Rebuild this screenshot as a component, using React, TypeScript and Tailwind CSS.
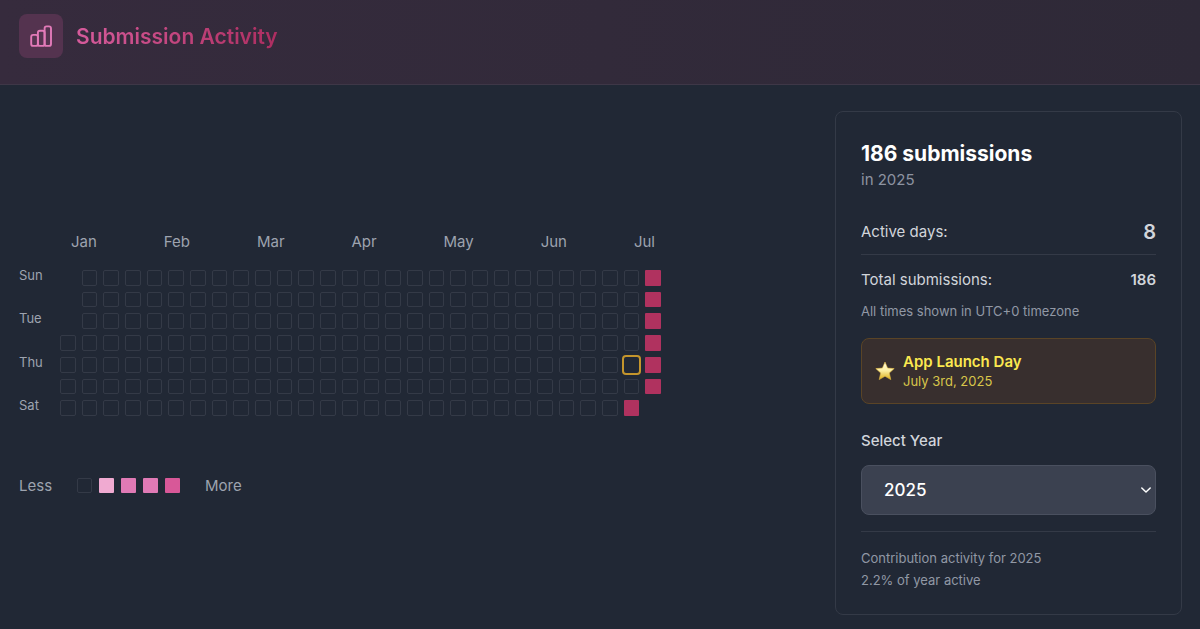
import { useState } from "react";

const WEEKS = 28;
const DAYS = 7;
const MONTHS = ["Jan", "Feb", "Mar", "Apr", "May", "Jun", "Jul"];
const DAY_LABELS = ["Sun", "", "Tue", "", "Thu", "", "Sat"];
const LEGEND = [
  "rounded-xs border border-[#343a47]",
  "rounded-[1px] bg-[#f0aad1]",
  "rounded-[1px] bg-[#e07ab5]",
  "rounded-[1px] bg-[#e07ab5]",
  "rounded-[1px] bg-[#d85898]",
];

type CellKind = "blank" | "empty" | "active" | "launch";

function cellKind(week: number, day: number): CellKind {
  if (week === 0 && day < 3) return "blank";
  if (week === WEEKS - 1) return day === 6 ? "blank" : "active";
  if (week === WEEKS - 2 && day === 6) return "active";
  if (week === WEEKS - 2 && day === 4) return "launch";
  return "empty";
}

const CELL_STYLE: Record<CellKind, string> = {
  blank: "",
  empty: "rounded-xs border border-[#343a47]",
  active: "rounded-[1px] bg-[#b0325f]",
  launch: "rounded-xs ring-2 ring-[#c4952c]",
};

function BarsIcon() {
  return (
    <svg
      className="size-6"
      viewBox="0 0 24 24"
      fill="none"
      stroke="currentColor"
      strokeWidth="1.9"
      strokeLinejoin="round"
      aria-hidden="true"
    >
      <rect x="2.2" y="10.9" width="6.7" height="11" rx="2" />
      <rect x="8.9" y="6.8" width="6.7" height="15.1" rx="2" />
      <rect x="15.6" y="2.4" width="6.4" height="19.5" rx="2" />
    </svg>
  );
}

function StarIcon() {
  return (
    <svg className="size-5 shrink-0" viewBox="0 0 20 20" aria-hidden="true">
      <defs>
        <linearGradient id="star" x1="0" y1="0" x2="0" y2="1">
          <stop offset="0" stopColor="#fffbe6" />
          <stop offset="0.5" stopColor="#fcee9f" />
          <stop offset="1" stopColor="#dcae16" />
        </linearGradient>
      </defs>
      <path
        d="M10 1 12.6 7.1 19.2 7.6 14.3 12 15.8 18.6 10 15.2 4.2 18.6 5.7 12 .8 7.6 7.4 7.1Z"
        fill="url(#star)"
        stroke="#e0b840"
        strokeWidth=".6"
        strokeLinejoin="round"
      />
    </svg>
  );
}

function Heatmap() {
  return (
    <div className="w-full max-w-[642px] pt-0.5">
      <div className="ml-[41px] flex justify-between pr-1.5 pl-[11px] text-[15px] leading-5 text-[#9da3af]">
        {MONTHS.map((m) => (
          <span key={m}>{m}</span>
        ))}
      </div>
      <div className="mt-[18px] flex">
        <div className="grid w-[41px] shrink-0 grid-rows-7 gap-1.5 text-[13px] leading-[10px] text-[#9da3af]">
          {DAY_LABELS.map((d, i) => (
            <span key={i}>{d}</span>
          ))}
        </div>
        <div className="grid flex-1 grid-flow-col grid-cols-[repeat(28,minmax(0,1fr))] grid-rows-7 gap-1.5">
          {Array.from({ length: WEEKS * DAYS }, (_, i) => (
            <div
              key={i}
              className={`aspect-square ${CELL_STYLE[cellKind(Math.floor(i / DAYS), i % DAYS)]}`}
            />
          ))}
        </div>
      </div>
      <div className="mt-[60px] flex items-center text-[15px] leading-5 text-[#9da3af]">
        <span className="w-[58px]">Less</span>
        <div className="flex gap-[7px]">
          {LEGEND.map((c, i) => (
            <div key={i} className={`size-[15px] ${c}`} />
          ))}
        </div>
        <span className="ml-[25px]">More</span>
      </div>
    </div>
  );
}

function Summary() {
  const [year, setYear] = useState("2025");
  return (
    <aside className="w-[347px] shrink-0 rounded-lg border border-[#343a47] px-[25px] pt-[25px] pb-[23px]">
      <h2 className="text-[21px] leading-[33px] font-bold text-white">186 submissions</h2>
      <p className="text-[15px] leading-5 text-[#8d93a1]">in 2025</p>

      <div className="mt-7 flex items-center justify-between border-b border-[#343a47] pb-2 text-[15px] leading-7 text-[#d1d5db]">
        <span>Active days:</span>
        <span className="text-xl leading-7 font-semibold">8</span>
      </div>
      <div className="mt-[13px] flex items-center justify-between text-[15px] leading-6 text-[#d1d5db]">
        <span>Total submissions:</span>
        <span className="font-semibold">186</span>
      </div>
      <p className="mt-[9px] text-[13px] leading-5 text-[#9198a5]">All times shown in UTC+0 timezone</p>

      <div className="mt-[17px] flex items-center gap-2 rounded-lg border border-[#5a4426] bg-[#382f2e] px-[13px] py-[13px]">
        <StarIcon />
        <div>
          <p className="text-[15px] leading-5 font-semibold text-[#fbe84f]">App Launch Day</p>
          <p className="text-[13px] leading-[18px] text-[#d8c64a]">July 3rd, 2025</p>
        </div>
      </div>

      <label htmlFor="year" className="mt-[25px] block text-[15px] leading-6 font-medium text-[#d1d5db]">
        Select Year
      </label>
      <div className="mt-3 grid items-center">
        <select
          id="year"
          value={year}
          onChange={(e) => setYear(e.target.value)}
          className="col-start-1 row-start-1 h-[50px] appearance-none rounded-lg border border-[#4a505f] bg-[#3b4150] px-[22px] pt-0.5 text-[17px] font-medium text-white"
        >
          <option>2025</option>
          <option>2024</option>
        </select>
        <svg
          className="pointer-events-none col-start-1 row-start-1 mr-1 size-3 justify-self-end text-white"
          viewBox="0 0 12 12"
          fill="none"
          stroke="currentColor"
          strokeWidth="1.5"
          strokeLinecap="round"
          strokeLinejoin="round"
          aria-hidden="true"
        >
          <path d="M1.8 4 6 8l4.2-4" />
        </svg>
      </div>

      <div className="mt-4 border-t border-[#343a47] pt-[15px] text-[13px] leading-[22px] text-[#9198a5]">
        <p>Contribution activity for {year}</p>
        <p>2.2% of year active</p>
      </div>
    </aside>
  );
}

export default function App() {
  return (
    <div className="min-h-screen bg-[#212835] font-['Inter',sans-serif]">
      <header className="flex items-center gap-[13px] border-b border-[#3e3747] bg-linear-to-r from-[#362b3d] to-[#2e2937] px-[19px] pt-3.5 pb-[26px]">
        <div className="flex size-11 items-center justify-center rounded-lg bg-[#54334f] text-[#e27ab8]">
          <BarsIcon />
        </div>
        <h1 className="bg-linear-to-r from-[#d65b9c] to-[#ad2d60] bg-clip-text pt-0.5 text-[21px] leading-8 font-semibold text-transparent">
          Submission Activity
        </h1>
      </header>
      <main className="flex items-center justify-between gap-8 pt-[26px] pr-[18px] pb-3.5 pl-[19px]">
        <Heatmap />
        <Summary />
      </main>
    </div>
  );
}
